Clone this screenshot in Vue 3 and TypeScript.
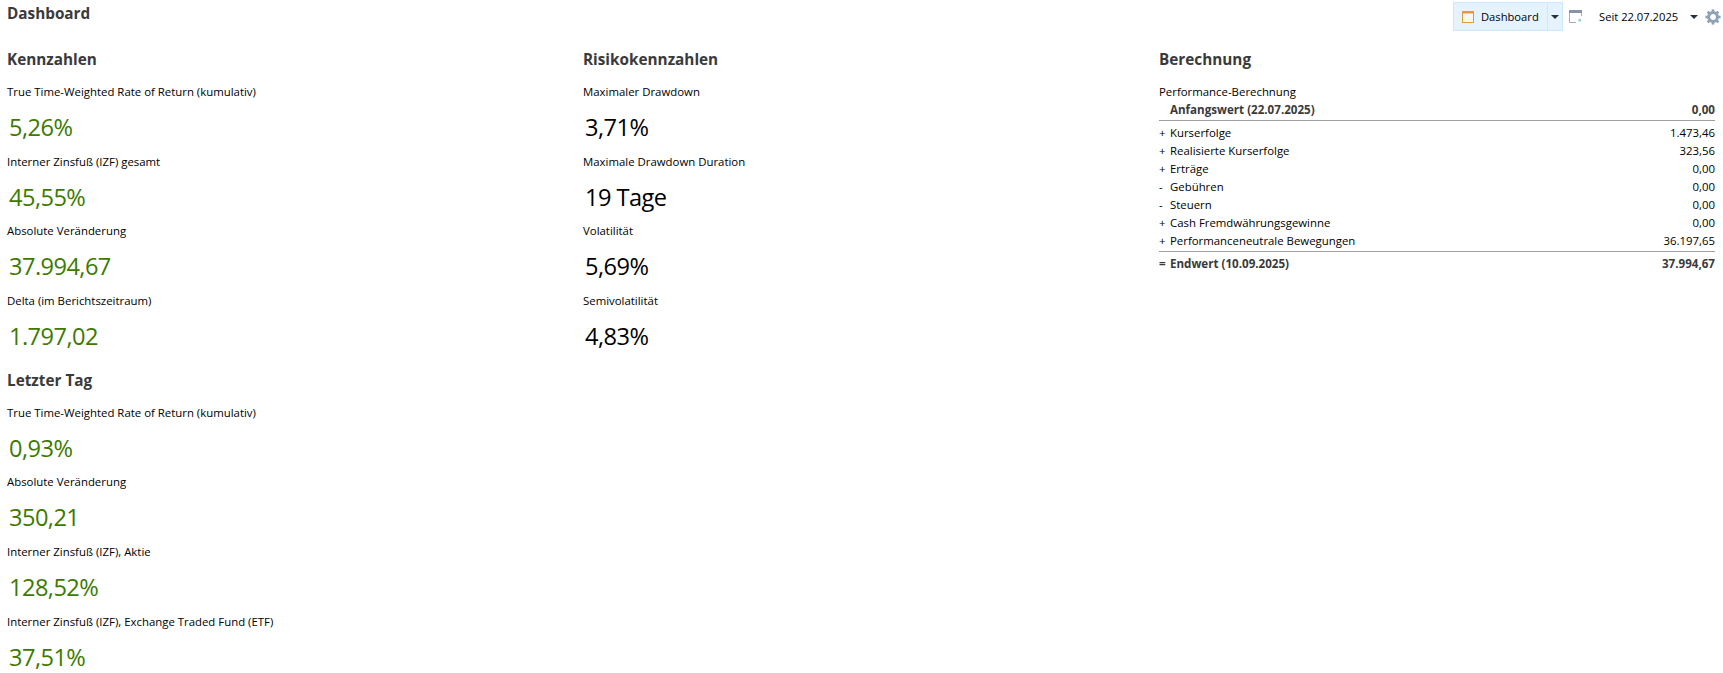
<template>
  <div class="dashboard">
    <header class="topbar">
      <h1 class="page-title">Dashboard</h1>
      <div class="toolbar">
        <div class="split-btn">
          <span class="split-main">
            <svg class="icon-dash" width="12" height="12" viewBox="0 0 12 12">
              <rect x="0.5" y="0.5" width="11" height="11" fill="#fdf6ec" stroke="#e39a3f" />
              <rect x="0" y="0" width="12" height="2.500" fill="#e39a3f" />
            </svg>
            Dashboard
          </span>
          <span class="split-caret"><i class="caret"></i></span>
        </div>
        <svg class="icon-chart" width="13" height="13" viewBox="0 0 13 13">
          <path d="M0.5 12.500V0.500H12.500V6M0.500 12.500H7" fill="none" stroke="#a3afbd" />
          <rect x="0" y="0" width="13" height="3" fill="#8595a8" />
          <rect x="9.500" y="9" width="2.500" height="2.500" fill="#8fd0c0" />
        </svg>
        <span class="period">Seit 22.07.2025</span>
        <i class="caret period-caret"></i>
        <svg class="icon-gear" width="16" height="16" viewBox="0 0 16 16">
          <g stroke="#8ea3b5" stroke-width="2.600">
            <line v-for="a in [0, 45, 90, 135]" :key="a" x1="8" y1="0.400" x2="8" y2="15.600" :transform="`rotate(${a} 8 8)`" />
          </g>
          <circle cx="8" cy="8" r="4.400" fill="#fff" stroke="#8ea3b5" stroke-width="3" />
        </svg>
      </div>
    </header>

    <div class="columns">
      <div class="col">
        <section v-for="group in leftGroups" :key="group.title" class="group">
          <h2 class="section-title">{{ group.title }}</h2>
          <div v-for="m in group.items" :key="m.label" class="metric">
            <div class="metric-label">{{ m.label }}</div>
            <div class="metric-value positive">{{ m.value }}</div>
          </div>
        </section>
      </div>

      <div class="col">
        <section class="group">
          <h2 class="section-title">Risikokennzahlen</h2>
          <div v-for="m in riskItems" :key="m.label" class="metric">
            <div class="metric-label">{{ m.label }}</div>
            <div class="metric-value">{{ m.value }}</div>
          </div>
        </section>
      </div>

      <div class="col col-calc">
        <h2 class="section-title">Berechnung</h2>
        <div class="calc-caption">Performance-Berechnung</div>
        <div class="calc-row bold start">
          <span class="sign"></span>
          <span class="name">Anfangswert (22.07.2025)</span>
          <span class="amount">0,00</span>
        </div>
        <div v-for="r in calcRows" :key="r.name" class="calc-row">
          <span class="sign">{{ r.sign }}</span>
          <span class="name">{{ r.name }}</span>
          <span class="amount">{{ r.amount }}</span>
        </div>
        <div class="calc-row bold end">
          <span class="sign">=</span>
          <span class="name">Endwert (10.09.2025)</span>
          <span class="amount">37.994,67</span>
        </div>
      </div>
    </div>
  </div>
</template>

<script setup lang="ts">
interface Metric {
  label: string
  value: string
}

const leftGroups: { title: string; items: Metric[] }[] = [
  {
    title: 'Kennzahlen',
    items: [
      { label: 'True Time-Weighted Rate of Return (kumulativ)', value: '5,26%' },
      { label: 'Interner Zinsfuß (IZF) gesamt', value: '45,55%' },
      { label: 'Absolute Veränderung', value: '37.994,67' },
      { label: 'Delta (im Berichtszeitraum)', value: '1.797,02' },
    ],
  },
  {
    title: 'Letzter Tag',
    items: [
      { label: 'True Time-Weighted Rate of Return (kumulativ)', value: '0,93%' },
      { label: 'Absolute Veränderung', value: '350,21' },
      { label: 'Interner Zinsfuß (IZF), Aktie', value: '128,52%' },
      { label: 'Interner Zinsfuß (IZF), Exchange Traded Fund (ETF)', value: '37,51%' },
    ],
  },
]

const riskItems: Metric[] = [
  { label: 'Maximaler Drawdown', value: '3,71%' },
  { label: 'Maximale Drawdown Duration', value: '19 Tage' },
  { label: 'Volatilität', value: '5,69%' },
  { label: 'Semivolatilität', value: '4,83%' },
]

const calcRows = [
  { sign: '+', name: 'Kurserfolge', amount: '1.473,46' },
  { sign: '+', name: 'Realisierte Kurserfolge', amount: '323,56' },
  { sign: '+', name: 'Erträge', amount: '0,00' },
  { sign: '-', name: 'Gebühren', amount: '0,00' },
  { sign: '-', name: 'Steuern', amount: '0,00' },
  { sign: '+', name: 'Cash Fremdwährungsgewinne', amount: '0,00' },
  { sign: '+', name: 'Performanceneutrale Bewegungen', amount: '36.197,65' },
]
</script>

<style>
html, body { background: #fff; overflow: hidden; }
</style>

<style scoped>
.dashboard {
  width: 1723px;
  height: 673px;
  overflow: hidden;
  font-family: "Open Sans", "Noto Sans", sans-serif;
  color: #000;
}

.topbar {
  display: flex;
  justify-content: space-between;
  height: 47px;
  padding-left: 7px;
}
.page-title {
  margin: 3px 0 0;
  font-size: 15.300px;
  line-height: 20px;
  font-weight: 700;
  color: #3a3a3a;
}

.toolbar {
  display: flex;
  align-items: center;
  height: 29px;
  margin-top: 2px;
  padding-right: 2px;
  font-size: 11.200px;
}
.split-btn {
  display: flex;
  height: 29px;
  background: #e5f3ff;
  border: 1px solid #cce8ff;
  box-sizing: border-box;
}
.split-main {
  display: flex;
  align-items: center;
  gap: 7px;
  width: 94px;
  padding-left: 8px;
  box-sizing: border-box;
  border-right: 1px solid #cce8ff;
}
.split-caret {
  display: flex;
  align-items: center;
  justify-content: center;
  width: 14px;
}
.caret {
  display: block;
  width: 0;
  height: 0;
  border-left: 4.500px solid transparent;
  border-right: 4.500px solid transparent;
  border-top: 4.500px solid #26323d;
}
.icon-chart { margin-left: 6px; }
.period { margin-left: 17px; width: 91px; }
.icon-gear { margin-left: 7px; }

.columns {
  display: grid;
  grid-template-columns: 576px 576px 564px;
  padding-left: 7px;
}
.section-title {
  margin: 0;
  font-size: 15.300px;
  line-height: 24px;
  font-weight: 700;
  color: #3a3a3a;
}
.group { margin-bottom: 18px; }
.metric {
  height: 69.700px;
  padding-top: 13px;
  box-sizing: border-box;
}
.metric-label {
  font-size: 11.400px;
  line-height: 16px;
}
.metric-value {
  margin: 14px 0 0 2px;
  font-size: 23.600px;
  font-weight: 400;
  letter-spacing: -0.550px;
  line-height: 26px;
}
.metric-value.positive { color: #3c7a00; }

.calc-caption {
  margin-top: 13px;
  font-size: 11.400px;
  line-height: 16px;
}
.calc-row {
  display: flex;
  width: 556px;
  height: 18.100px;
  font-size: 11.400px;
  line-height: 18px;
}
.calc-row.bold { font-size: 11.600px; font-weight: 700; color: #3a3a3a; }
.calc-row.start {
  box-sizing: border-box;
  height: 21px;
  line-height: 20px;
  margin-bottom: 2.500px;
  border-bottom: 1px solid #a0a0a0;
}
.calc-row.end {
  box-sizing: border-box;
  height: 22px;
  margin-top: 0.500px;
  padding-top: 3px;
  border-top: 1px solid #a0a0a0;
}
.sign { width: 11px; flex-shrink: 0; }
.name { flex: 1; }
.amount { text-align: right; }
</style>
